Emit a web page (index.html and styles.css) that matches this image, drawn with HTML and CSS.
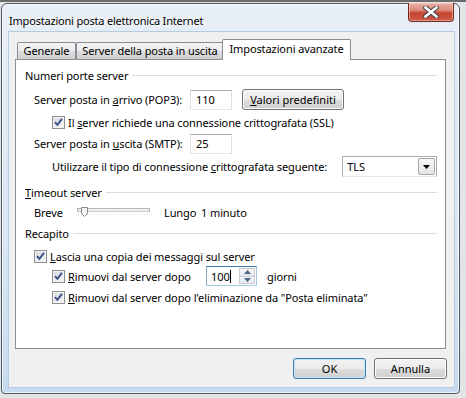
FILE: index.html
```html
<!DOCTYPE html>
<html lang="it">
<head>
    <meta charset="UTF-8" />
    <title>Impostazioni posta elettronica Internet</title>
    <link rel="stylesheet" href="styles.css">
</head>
<body>
    <div class="window">
        <div class="titlebar">
            <span class="title">Impostazioni posta elettronica Internet</span>
            <button class="close-btn">
                <svg width="16" height="12" viewBox="0 0 16 12">
                    <path d="M2.5 1.5 L13.5 10.5 M13.5 1.5 L2.5 10.5" stroke="#3a3f48" stroke-width="4.6" stroke-linecap="square" />
                    <path d="M2.5 1.5 L13.5 10.5 M13.5 1.5 L2.5 10.5" stroke="#ffffff" stroke-width="2.6" stroke-linecap="square" />
                </svg>
            </button>
        </div>

        <div class="client">
            <div class="tabs">
                <div class="tab tab-first">Generale</div>
                <div class="tab tab-second">Server della posta in uscita</div>
                <div class="tab tab-active">Impostazioni avanzate</div>
            </div>

            <div class="panel">
                <!-- Numeri porte -->
                <div class="group-head"><span>Numeri porte server</span><i class="line"></i></div>

                <div class="row row-field first-field">
                    <span class="label">Server posta in <u>a</u>rrivo (POP3):</span>
                    <div class="textbox">110</div>
                    <button class="btn btn-defaults"><u>V</u>alori predefiniti</button>
                </div>

                <div class="row row-check ssl">
                    <span class="check"><svg width="11" height="11" viewBox="0 0 11 11"><path d="M2 5.2 L4.4 7.8 L9 1.8" /></svg></span>
                    <span>Il <u>s</u>erver richiede una connessione crittografata (SSL)</span>
                </div>

                <div class="row row-field smtp">
                    <span class="label">Server posta in <u>u</u>scita (SMTP):</span>
                    <div class="textbox">25</div>
                </div>

                <div class="row row-field enc">
                    <span class="enc-label">Utilizzare il tipo di connessione <u>c</u>rittografata seguente:</span>
                    <div class="combo">
                        <span>TLS</span>
                        <span class="combo-btn">
                            <svg width="7" height="4" viewBox="0 0 7 4"><path d="M0 0 H7 L3.5 4 Z" fill="#000" /></svg>
                        </span>
                    </div>
                </div>

                <!-- Timeout -->
                <div class="group-head timeout-head"><span><u>T</u>imeout server</span><i class="line"></i></div>

                <div class="row slider-row">
                    <span class="breve">Breve</span>
                    <svg class="slider" width="73" height="16" viewBox="0 0 73 16">
                        <rect x="0.5" y="4.5" width="72" height="3" fill="#f2f2f2" stroke="#b4b4b4" />
                        <line x1="1" y1="7" x2="72" y2="7" stroke="#e6e6e6" />
                        <line x1="1" y1="10.5" x2="72" y2="10.5" stroke="#d8d8d8" stroke-dasharray="1 2" />
                        <path d="M4.5 3.5 H10.5 V9.5 L7.5 12.5 L4.5 9.5 Z" fill="#f6f6f6" stroke="#8a8a8a" />
                    </svg>
                    <span class="lungo">Lungo</span>
                    <span>1 minuto</span>
                </div>

                <!-- Recapito -->
                <div class="group-head recapito-head"><span>Recapito</span><i class="line"></i></div>

                <div class="row row-check keep">
                    <span class="check"><svg width="11" height="11" viewBox="0 0 11 11"><path d="M2 5.2 L4.4 7.8 L9 1.8" /></svg></span>
                    <span><u>L</u>ascia una copia dei messaggi sul server</span>
                </div>

                <div class="row remove-row">
                    <span class="check"><svg width="11" height="11" viewBox="0 0 11 11"><path d="M2 5.2 L4.4 7.8 L9 1.8" /></svg></span>
                    <span class="remove-label"><u>R</u>imuovi dal server dopo</span>
                    <div class="spinner">
                        <span class="spin-text">100<i class="caret"></i></span>
                        <span class="spin-btns">
                            <span class="spin-up"><svg width="7" height="4" viewBox="0 0 7 4"><path d="M0 4 H7 L3.5 0 Z" fill="#4d6185" /></svg></span>
                            <span class="spin-down"><svg width="7" height="4" viewBox="0 0 7 4"><path d="M0 0 H7 L3.5 4 Z" fill="#4d6185" /></svg></span>
                        </span>
                    </div>
                    <span class="giorni">giorni</span>
                </div>

                <div class="row row-check last">
                    <span class="check"><svg width="11" height="11" viewBox="0 0 11 11"><path d="M2 5.2 L4.4 7.8 L9 1.8" /></svg></span>
                    <span><u>R</u>imuovi dal server dopo l'eliminazione da "Posta eliminata"</span>
                </div>
            </div>

            <div class="actions">
                <button class="btn btn-ok">OK</button>
                <button class="btn">Annulla</button>
            </div>
        </div>
    </div>
</body>
</html>
```

FILE: styles.css
```css
/* Global */
* {
    box-sizing: border-box;
}

body {
    margin: 0;
    padding: 3px 0 0 1px;
    width: 466px;
    height: 398px;
    overflow: hidden;
    background: #e2e4e6;
    border-top: 2px solid #6b6b6b;
    font-family: "Noto Sans", "Open Sans", Arial, sans-serif;
    font-size: 11px;
    letter-spacing: -0.1px;
    color: #000;
}

/* Window frame (Aero) */
.window {
    width: 459px;
    height: 391px;
    margin-top: -2px;
    border: 1px solid #4c5866;
    border-radius: 6px 6px 4px 4px;
    background: linear-gradient(#e8eef6, #dae6f3 60%, #c6dbf0);
    box-shadow: inset 0 0 0 1px rgba(255, 255, 255, 0.7);
    padding: 0 4px 5px 6px;
    display: flex;
    flex-direction: column;
}

.titlebar {
    height: 27px;
    display: flex;
    align-items: flex-start;
    justify-content: space-between;
}

.title {
    margin: 9px 0 0 1px;
    letter-spacing: -0.2px;
    text-shadow: 0 0 6px #fff, 0 0 3px #fff;
}

.close-btn {
    width: 46px;
    height: 19px;
    margin: -1px 1px 0 0;
    padding: 0;
    border: 1px solid #6e2a22;
    border-top: none;
    border-radius: 0 0 4px 4px;
    background: linear-gradient(#eab2a5 0%, #dc8a7b 40%, #c6432f 55%, #cb5a45 100%);
    box-shadow: inset 0 0 0 1px rgba(255, 220, 210, 0.5);
    display: flex;
    align-items: center;
    justify-content: center;
}

/* Client area */
.client {
    flex: 1;
    background: #f0f0f0;
    border: 1px solid #b6cae0;
    padding: 7px 7px 0 6px;
    display: flex;
    flex-direction: column;
}

/* Tabs */
.tabs {
    height: 20px;
    display: flex;
    align-items: flex-end;
    padding-left: 2px;
    position: relative;
    z-index: 1;
}

.tab {
    height: 17px;
    border: 1px solid #898c95;
    border-bottom: none;
    border-radius: 2px 2px 0 0;
    background: linear-gradient(#f3f3f3, #ebebeb 50%, #dddddd 51%, #cfcfcf);
    text-align: center;
    line-height: 15px;
}

.tab-first {
    width: 59px;
}

.tab-second {
    width: 148px;
}

.tab-active {
    width: 129px;
    height: 21px;
    margin-left: -2px;
    margin-bottom: -1px;
    background: #fff;
    line-height: 17px;
}

/* Tab panel */
.panel {
    width: 431px;
    height: 290px;
    background: #fff;
    border: 1px solid #898c95;
    padding: 7px 8px 0 9px;
}

.row {
    display: flex;
    align-items: center;
    white-space: nowrap;
}

.group-head {
    height: 16px;
    display: flex;
    align-items: center;
}

.group-head .line {
    flex: 1;
    height: 1px;
    margin-left: 4px;
    background: #d5dfe5;
}

.timeout-head {
    margin-top: 7px;
}

.recapito-head {
    margin-top: 5px;
}

.row-field {
    height: 21px;
    padding-left: 9px;
}

.first-field {
    margin-top: 6px;
}

.label {
    width: 156px;
}

.textbox {
    width: 42px;
    height: 20px;
    border: 1px solid #dbdfe6;
    border-top-color: #abadb3;
    border-bottom-color: #e3e9ef;
    padding-left: 5px;
    line-height: 18px;
    background: #fff;
}

.btn {
    height: 21px;
    padding: 0;
    border: 1px solid #707070;
    border-radius: 3px;
    background: linear-gradient(#f2f2f2, #ebebeb 50%, #dddddd 51%, #cfcfcf);
    box-shadow: inset 0 0 0 1px #fcfcfc;
    font: inherit;
    color: #000;
}

.btn-defaults {
    width: 102px;
    margin-left: 10px;
}

.row-check {
    height: 16px;
    padding-left: 27px;
}

.check {
    width: 13px;
    height: 13px;
    margin-right: 3px;
    border: 1px solid #8e8f8f;
    background: linear-gradient(135deg, #d4d7db, #f7f7f7);
    box-shadow: inset 0 0 0 1px #f4f4f4;
    flex: none;
}

.check svg {
    display: block;
}

.check path {
    fill: none;
    stroke: #3a4f88;
    stroke-width: 1.9;
}

.ssl {
    margin-top: 4px;
}

.smtp {
    margin-top: 3px;
}

.enc {
    margin-top: 2px;
    padding-left: 27px;
}

.enc-label {
    width: 291px;
}

.combo {
    width: 95px;
    height: 21px;
    border: 1px solid #abadb3;
    border-bottom-color: #e3e9ef;
    background: #fff;
    display: flex;
    align-items: center;
    justify-content: space-between;
    padding: 0 1px 0 4px;
}

.combo-btn {
    width: 17px;
    height: 17px;
    border: 1px solid #a6a6a6;
    border-radius: 2px;
    background: linear-gradient(#f7f7f7, #e4e4e4);
    display: flex;
    align-items: center;
    justify-content: center;
}

/* Slider */
.slider-row {
    height: 16px;
    margin-top: 4px;
    padding-left: 9px;
}

.breve {
    width: 43px;
}

.slider {
    display: block;
}

.lungo {
    width: 37px;
    margin-left: 14px;
}

/* Recapito */
.keep {
    margin-top: 7px;
    padding-left: 9px;
}

.remove-row {
    height: 20px;
    margin-top: 2px;
    padding-left: 27px;
}

.remove-label {
    width: 138px;
}

.spinner {
    width: 51px;
    height: 20px;
    border: 1px solid #a4c9e3;
    border-top-color: #3d7bad;
    border-left-color: #7ea9cf;
    background: #fff;
    display: flex;
    justify-content: space-between;
    padding: 1px 1px 1px 4px;
}

.spin-text {
    line-height: 17px;
}

.caret {
    display: inline-block;
    width: 1px;
    height: 13px;
    background: #000;
    vertical-align: -2px;
}

.spin-btns {
    width: 16px;
    display: flex;
    flex-direction: column;
}

.spin-up,
.spin-down {
    flex: 1;
    border: 1px solid #c9cdd3;
    background: linear-gradient(#f5f6f8, #e2e6ec);
    display: flex;
    align-items: center;
    justify-content: center;
}

.spin-down {
    border-top: none;
}

.giorni {
    margin-left: 10px;
}

.last {
    margin-top: 3px;
}

/* Dialog buttons */
.actions {
    display: flex;
    justify-content: flex-end;
    gap: 8px;
    margin-top: 9px;
}

.actions .btn {
    width: 73px;
}

.btn-ok {
    border-color: #3c7fb1;
    box-shadow: inset 0 0 0 1px #c2e4f6;
}
```
